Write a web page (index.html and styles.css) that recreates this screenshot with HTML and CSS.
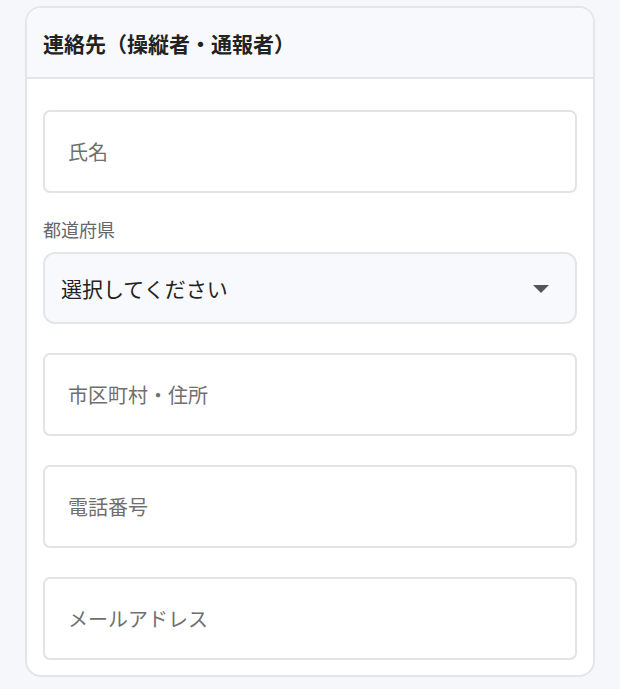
FILE: index.html
```html
<!DOCTYPE html>
<html lang="ja">
<head>
<meta charset="utf-8">
<title>連絡先</title>
<link rel="stylesheet" href="styles.css">
</head>
<body>
<section class="card">
  <header class="card-header">
    <h2 class="card-title">連絡先（操縦者・通報者）</h2>
  </header>
  <div class="card-body">
    <input class="field" type="text" placeholder="氏名">
    <label class="field-label" for="pref">都道府県</label>
    <div class="select-wrap">
      <select id="pref" class="select">
        <option>選択してください</option>
      </select>
      <svg class="select-arrow" width="16" height="8" viewBox="0 0 16 8" aria-hidden="true"><path d="M0 0 H16 L8 8 Z" fill="#555"/></svg>
    </div>
    <input class="field gap" type="text" placeholder="市区町村・住所">
    <input class="field gap" type="tel" placeholder="電話番号">
    <input class="field gap" type="email" placeholder="メールアドレス">
  </div>
</section>
</body>
</html>
```

FILE: styles.css
```css
html, body {
  margin: 0;
  padding: 0;
  background: #f6f7fb;
}
body {
  font-family: "Noto Sans CJK JP", "Noto Sans", sans-serif;
  padding: 6px 25px 0 25px;
}
.card {
  width: 570px;
  box-sizing: border-box;
  background: #ffffff;
  border: 2px solid #e4e5e9;
  border-radius: 16px;
  overflow: hidden;
}
.card-header {
  background: #f8f9fc;
  border-bottom: 2px solid #e4e5e9;
  height: 71px;
  box-sizing: border-box;
  display: flex;
  align-items: center;
  padding: 0 16px;
}
.card-title {
  margin: 0;
  font-size: 21px;
  font-weight: 700;
  color: #222222;
  line-height: 1;
  padding-top: 2px;
}
.card-body {
  padding: 31px 16px 15px 16px;
  display: flex;
  flex-direction: column;
}
.field {
  display: block;
  height: 83px;
  box-sizing: border-box;
  border: 2px solid #e3e3e6;
  border-radius: 7px;
  background: #ffffff;
  padding: 0 23px;
  font-family: inherit;
  font-size: 20px;
  color: #222;
  outline: none;
  margin: 0;
}
.field::placeholder {
  color: #6f6f6f;
}
.field.gap {
  margin-top: 29px;
}
.field-label {
  margin-top: 24px;
  margin-bottom: 10px;
  font-size: 18px;
  line-height: 25px;
  color: #666666;
}
.select-wrap {
  position: relative;
}
.select {
  display: block;
  width: 100%;
  height: 72px;
  box-sizing: border-box;
  appearance: none;
  -webkit-appearance: none;
  background: #f8f9fc;
  border: 2px solid #e4e5e9;
  border-radius: 12px;
  padding: 0 16px;
  font-family: inherit;
  font-size: 21px;
  color: #222222;
  outline: none;
  margin: 0;
}
.select-arrow {
  position: absolute;
  right: 28px;
  top: 33px;
  pointer-events: none;
}
```
